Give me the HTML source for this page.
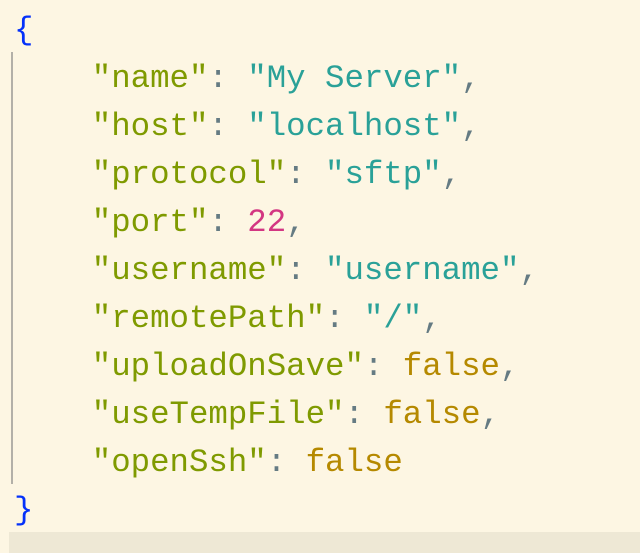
<!DOCTYPE html>
<html><head><style>
html,body{margin:0;padding:0;width:640px;height:553px;overflow:hidden;background:#fdf6e3}
.cur{position:absolute;left:9px;top:532px;width:631px;height:21px;background:#eee8d5}
.guide{position:absolute;left:11px;top:52px;width:2px;height:432px;background:#b3b0a8}
pre{position:absolute;left:14px;top:7px;margin:0;font-family:"Liberation Mono",monospace;font-size:32.4px;line-height:48px;color:#657b83}
.b{color:#0431fa}.k{color:#7f9a00}.s{color:#2aa198}.n{color:#d33682}.f{color:#b58900}
</style></head><body>
<div class="cur"></div><div class="guide"></div>
<pre><span class="b">{</span>
    <span class="k">"name"</span>: <span class="s">"My Server"</span>,
    <span class="k">"host"</span>: <span class="s">"localhost"</span>,
    <span class="k">"protocol"</span>: <span class="s">"sftp"</span>,
    <span class="k">"port"</span>: <span class="n">22</span>,
    <span class="k">"username"</span>: <span class="s">"username"</span>,
    <span class="k">"remotePath"</span>: <span class="s">"/"</span>,
    <span class="k">"uploadOnSave"</span>: <span class="f">false</span>,
    <span class="k">"useTempFile"</span>: <span class="f">false</span>,
    <span class="k">"openSsh"</span>: <span class="f">false</span>
<span class="b">}</span></pre>
</body></html>
